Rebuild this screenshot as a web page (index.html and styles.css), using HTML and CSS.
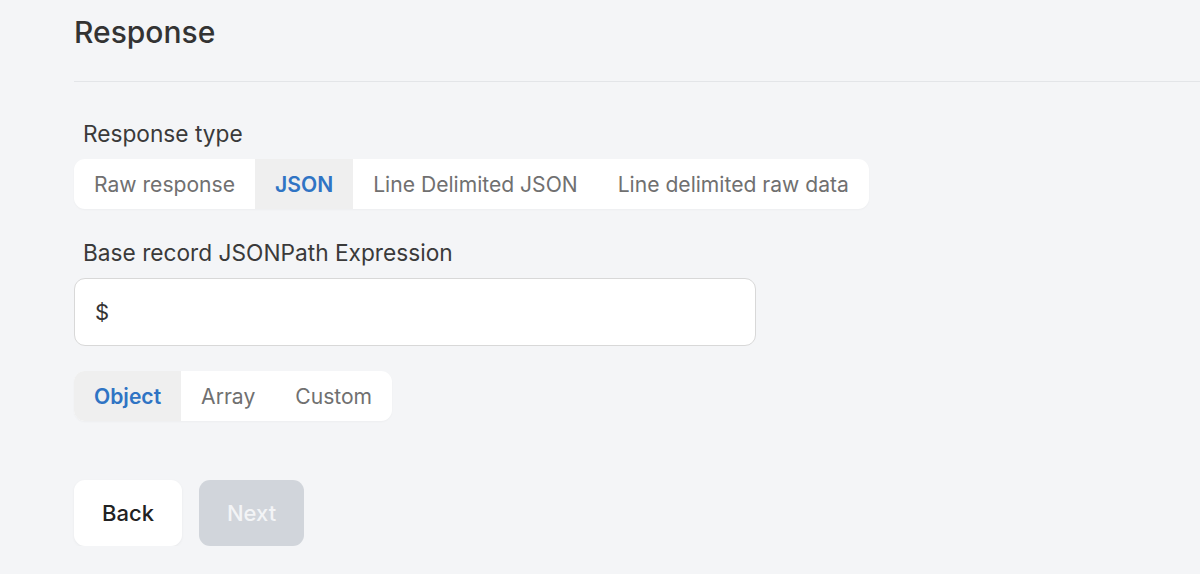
FILE: index.html
```html
<!DOCTYPE html>
<html lang="en">
<head>
    <meta charset="UTF-8">
    <meta name="viewport" content="width=device-width, initial-scale=1.0">
    <title>Response</title>
    <link rel="stylesheet" href="styles.css">
</head>
<body>
    <div class="page">
        <h1 class="title">Response</h1>
        <div class="divider"></div>

        <div class="form">
            <label class="label">Response type</label>
            <div class="segments">
                <button class="seg">Raw response</button>
                <button class="seg active">JSON</button>
                <button class="seg">Line Delimited JSON</button>
                <button class="seg">Line delimited raw data</button>
            </div>

            <label class="label">Base record JSONPath Expression</label>
            <input class="text-input" type="text" value="$">

            <div class="segments">
                <button class="seg active">Object</button>
                <button class="seg">Array</button>
                <button class="seg">Custom</button>
            </div>

            <div class="actions">
                <button class="btn back">Back</button>
                <button class="btn next" disabled>Next</button>
            </div>
        </div>
    </div>
</body>
</html>
```

FILE: styles.css
```css
/* Basic styling */
body { margin: 0; background: #f4f5f7; font-family: Inter, "Noto Sans", sans-serif; color: #333; }
.page { padding: 14px 0 0 74px; }
.title { margin: 0; font-size: 30px; font-weight: 500; color: #333; line-height: 36px; }
.divider { height: 1px; background: #e3e5e8; margin-top: 31px; }
.form { display: flex; flex-direction: column; align-items: flex-start; padding-top: 37px; }
.label { font-size: 22.7px; color: #3a3a3a; padding-left: 9px; line-height: 30px; margin-bottom: 10px; }
.segments { display: flex; background: #fff; border-radius: 11px; overflow: hidden; box-shadow: 0 1px 2px rgba(0,0,0,0.03); margin-bottom: 29px; }
.seg { border: 0; background: transparent; font-family: inherit; font-size: 21.1px; color: #707070; padding: 0 20px; height: 50px; cursor: pointer; }
.seg.active { background: #efefef; color: #2f74c4; font-weight: 600; }
.text-input { width: 682px; height: 68px; box-sizing: border-box; border: 1px solid #d8d8d8; border-radius: 11px; background: #fff; font-family: inherit; font-size: 22px; color: #333; padding: 0 20px; margin-bottom: 25px; outline: none; }
.actions { display: flex; gap: 17px; margin-top: 30px; }
.btn { border: 0; border-radius: 11px; height: 66px; font-family: inherit; font-size: 22px; font-weight: 500; padding: 0 28px; cursor: pointer; }
.btn.back { background: #fff; color: #222; box-shadow: 0 1px 3px rgba(0,0,0,0.05); }
.btn.next { background: #d1d5db; color: #f3f4f6; }
```
